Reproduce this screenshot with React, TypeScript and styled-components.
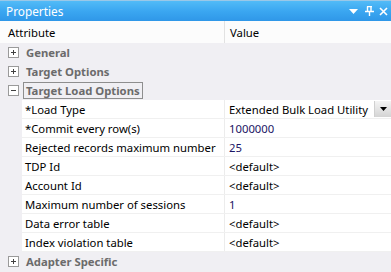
import React from 'react';
import styled, { createGlobalStyle } from 'styled-components';

const GlobalStyle = createGlobalStyle`
  html, body {
    margin: 0;
    padding: 0;
    background: #f0eff3;
  }
  body {
    font-family: "Noto Sans", "Open Sans", sans-serif;
    font-size: 11.3px;
  }
`;

const Panel = styled.div`
  width: 391px;
  height: 272px;
  overflow: hidden;
  background: #f0eff3;
`;

const TitleBar = styled.div`
  height: 21px;
  display: flex;
  align-items: center;
  justify-content: space-between;
  padding: 0 3px 0 6px;
  background: linear-gradient(to bottom, #52bbf7 0%, #3ba7f1 50%, #2f97e8 100%);
  border-top: 1px solid #9ac8e8;
  box-sizing: border-box;
  color: #ffffff;
`;

const Title = styled.span`
  font-size: 11.8px;
`;

const TitleButtons = styled.div`
  display: flex;
  align-items: center;
  gap: 5px;
`;

const HeaderRow = styled.div`
  height: 22px;
  display: grid;
  grid-template-columns: 224px 1fr;
  background: #fcfcfc;
  color: #000;
`;

const HeaderCell = styled.div<{ $divider?: boolean }>`
  display: flex;
  align-items: center;
  padding-left: ${p => (p.$divider ? '5px' : '8px')};
  border-left: ${p => (p.$divider ? '1px solid #e2e2e2' : 'none')};
`;

const CategoryRow = styled.div`
  height: 19px;
  display: flex;
  align-items: center;
  padding-left: 8px;
  gap: 4px;
`;

const ToggleBox = styled.span`
  width: 9px;
  height: 9px;
  border: 1px solid #9a9a9a;
  background: #fff;
  position: relative;
  flex: none;
  &::before {
    content: '';
    position: absolute;
    left: 2px;
    top: 4px;
    width: 5px;
    height: 1px;
    background: #404040;
  }
`;

const PlusBox = styled(ToggleBox)`
  &::after {
    content: '';
    position: absolute;
    left: 4px;
    top: 2px;
    width: 1px;
    height: 5px;
    background: #404040;
  }
`;

const CategoryLabel = styled.span<{ $selected?: boolean }>`
  font-weight: bold;
  color: #6b6b6b;
  padding: 0 2px;
  line-height: 15px;
  border: 1px solid ${p => (p.$selected ? '#8e8e8e' : 'transparent')};
`;

const PropRow = styled.div`
  height: 19px;
  display: grid;
  grid-template-columns: 202px 1fr;
  margin-left: 22px;
  background: #fff;
  border-bottom: 1px solid #f0f0f0;
  box-sizing: border-box;
`;

const NameCell = styled.div`
  display: flex;
  align-items: center;
  padding-left: 3px;
  color: #000;
  white-space: nowrap;
  overflow: hidden;
`;

const ValueCell = styled.div<{ $num?: boolean }>`
  display: flex;
  align-items: center;
  justify-content: space-between;
  padding-left: 4px;
  border-left: 1px solid #ececec;
  color: ${p => (p.$num ? '#1b1464' : '#000')};
  white-space: nowrap;
`;

const DropButton = styled.span`
  width: 16px;
  height: 16px;
  display: flex;
  align-items: center;
  justify-content: center;
  background: linear-gradient(to bottom, #f4f4f4, #d4d4d4);
  border-left: 1px solid #d0d0d0;
`;

type Prop = { name: string; value: string; num?: boolean; dropdown?: boolean };

const loadProps: Prop[] = [
  { name: '*Load Type', value: 'Extended Bulk Load Utility', dropdown: true },
  { name: '*Commit every row(s)', value: '1000000', num: true },
  { name: 'Rejected records maximum number', value: '25', num: true },
  { name: 'TDP Id', value: '<default>' },
  { name: 'Account Id', value: '<default>' },
  { name: 'Maximum number of sessions', value: '1', num: true },
  { name: 'Data error table', value: '<default>' },
  { name: 'Index violation table', value: '<default>' },
];

const Caret = ({ color = '#fff', w = 9 }: { color?: string; w?: number }) => (
  <svg width={w} height={Math.ceil(w / 2)} viewBox="0 0 9 5">
    <path d="M0 0h9L4.5 5z" fill={color} />
  </svg>
);

const App: React.FC = () => {
  return (
    <Panel>
      <GlobalStyle />
      <TitleBar>
        <Title>Properties</Title>
        <TitleButtons>
          <Caret />
          <svg width="9" height="10" viewBox="0 0 9 10" style={{ marginLeft: 2 }}>
            <path d="M2 0.5h5M2.5 0.5v5M6 0.5v5M0 5.5h9M4.5 5.5v4.5" stroke="#fff" strokeWidth="1.4" fill="none" />
          </svg>
          <svg width="9" height="9" viewBox="0 0 9 9">
            <path d="M1 1l7 7M8 1l-7 7" stroke="#fff" strokeWidth="1.6" />
          </svg>
        </TitleButtons>
      </TitleBar>
      <HeaderRow>
        <HeaderCell>Attribute</HeaderCell>
        <HeaderCell $divider>Value</HeaderCell>
      </HeaderRow>
      <CategoryRow>
        <PlusBox />
        <CategoryLabel>General</CategoryLabel>
      </CategoryRow>
      <CategoryRow>
        <PlusBox />
        <CategoryLabel>Target Options</CategoryLabel>
      </CategoryRow>
      <CategoryRow>
        <ToggleBox />
        <CategoryLabel $selected>Target Load Options</CategoryLabel>
      </CategoryRow>
      {loadProps.map(p => (
        <PropRow key={p.name}>
          <NameCell>{p.name}</NameCell>
          <ValueCell $num={p.num}>
            {p.value}
            {p.dropdown && (
              <DropButton>
                <Caret color="#000" w={7} />
              </DropButton>
            )}
          </ValueCell>
        </PropRow>
      ))}
      <CategoryRow>
        <PlusBox />
        <CategoryLabel>Adapter Specific</CategoryLabel>
      </CategoryRow>
    </Panel>
  );
};

export default App;
